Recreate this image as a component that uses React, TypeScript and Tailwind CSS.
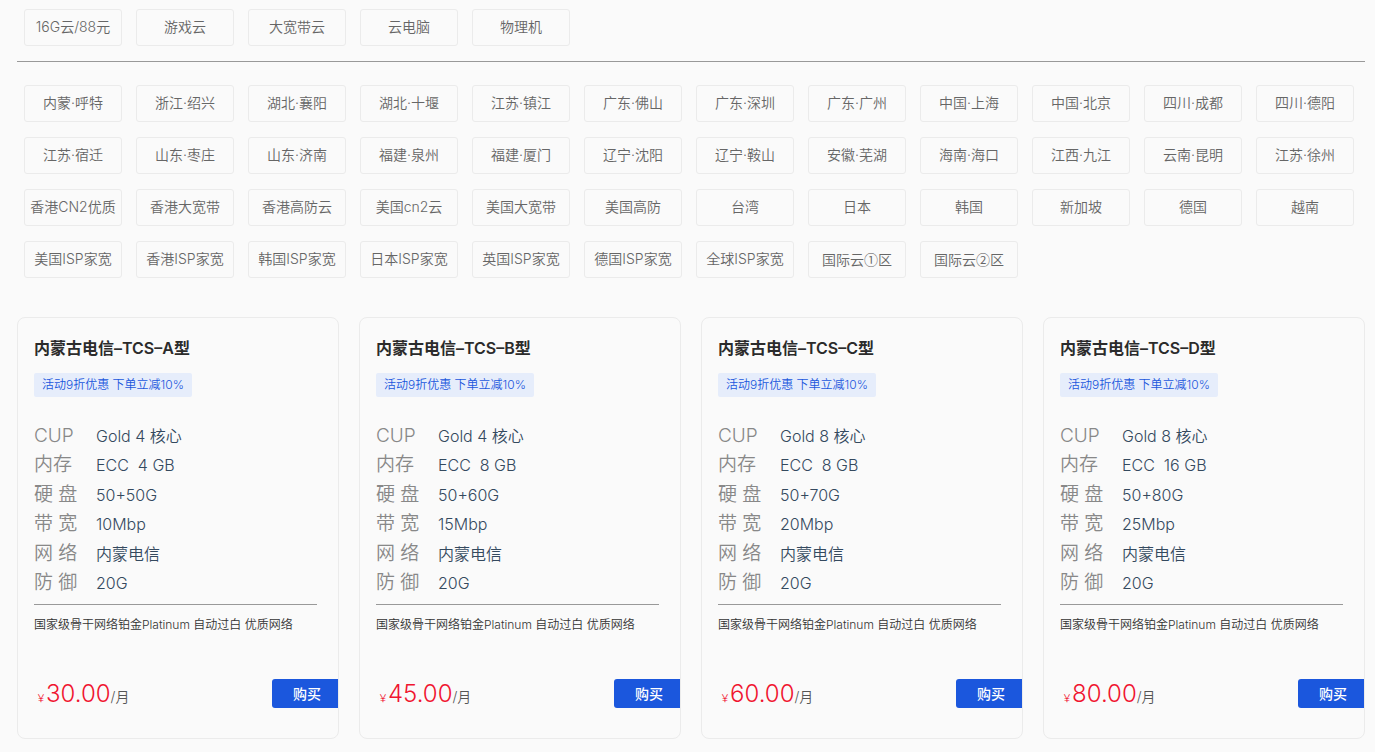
const CATEGORIES = ["16G云/88元", "游戏云", "大宽带云", "云电脑", "物理机"]

const REGIONS = [
  "内蒙·呼特", "浙江·绍兴", "湖北·襄阳", "湖北·十堰", "江苏·镇江", "广东·佛山",
  "广东·深圳", "广东·广州", "中国·上海", "中国·北京", "四川·成都", "四川·德阳",
  "江苏·宿迁", "山东·枣庄", "山东·济南", "福建·泉州", "福建·厦门", "辽宁·沈阳",
  "辽宁·鞍山", "安徽·芜湖", "海南·海口", "江西·九江", "云南·昆明", "江苏·徐州",
  "香港CN2优质", "香港大宽带", "香港高防云", "美国cn2云", "美国大宽带", "美国高防",
  "台湾", "日本", "韩国", "新加坡", "德国", "越南",
  "美国ISP家宽", "香港ISP家宽", "韩国ISP家宽", "日本ISP家宽", "英国ISP家宽", "德国ISP家宽",
  "全球ISP家宽", "国际云①区", "国际云②区",
]

interface Plan {
  id: string
  cores: number
  memory: number
  disk: string
  bandwidth: string
  price: string
}

const PLANS: Plan[] = [
  { id: "A", cores: 4, memory: 4, disk: "50+50G", bandwidth: "10Mbp", price: "30.00" },
  { id: "B", cores: 4, memory: 8, disk: "50+60G", bandwidth: "15Mbp", price: "45.00" },
  { id: "C", cores: 8, memory: 8, disk: "50+70G", bandwidth: "20Mbp", price: "60.00" },
  { id: "D", cores: 8, memory: 16, disk: "50+80G", bandwidth: "25Mbp", price: "80.00" },
]

// Inter draws circled digits oversized, so those names use the CJK font alone
const hasCircledDigit = (text: string) => /[①②]/.test(text)

function Tiles({ items }: { items: string[] }) {
  return (
    <div className="flex flex-wrap gap-x-3.5 gap-y-[15px] pl-[7px]">
      {items.map((item) => (
        <button
          key={item}
          type="button"
          className={`h-[37px] w-[98px] rounded-[3px] border border-[#ebebeb] pb-0.5 text-sm whitespace-nowrap text-[#666] ${
            hasCircledDigit(item) ? "font-['Noto_Sans_CJK_SC',sans-serif]" : ""
          }`}
        >
          {item}
        </button>
      ))}
    </div>
  )
}

function PlanCard({ plan }: { plan: Plan }) {
  const specs = [
    ["CUP", `Gold ${plan.cores} 核心`],
    ["内存", `ECC  ${plan.memory} GB`],
    ["硬 盘", plan.disk],
    ["带 宽", plan.bandwidth],
    ["网 络", "内蒙电信"],
    ["防 御", "20G"],
  ]

  return (
    <article className="flex flex-col overflow-hidden rounded-lg border border-[#ebebeb] pt-[18px] pb-[30px] pl-4">
      <h2 className="text-base leading-6 font-semibold text-[#2b2b2b]">
        内蒙古电信–TCS–{plan.id}型
      </h2>
      <p className="mt-[13px] self-start rounded-xs bg-[#e6edfb] px-2 text-xs leading-6 text-[#1b57dd]">
        活动9折优惠 下单立减10%
      </p>

      {/* Specs */}
      <dl className="mt-6 grid min-h-[177px] auto-rows-fr">
        {specs.map(([label, value]) => (
          <div key={label} className="flex items-center">
            <dt className="w-[62px] text-[19px] leading-7 text-[#888]">{label}</dt>
            <dd className="text-base leading-7 whitespace-pre text-[#34495e]">{value}</dd>
          </div>
        ))}
      </dl>

      <hr className="mt-1.5 mr-[21px] border-[#999]" />
      <p className="mt-2.5 text-xs leading-5 text-[#333]">
        国家级骨干网络铂金Platinum 自动过白 优质网络
      </p>

      {/* Price and buy button */}
      <div className="mt-11 flex items-center justify-between">
        <p className="flex items-baseline pl-0.5 leading-none text-[#f0142f]">
          <span className="text-[10px] leading-none">￥</span>
          <span className="text-2xl leading-7">{plan.price}</span>
          <span className="text-sm leading-none text-[#555]">/月</span>
        </p>
        <button
          type="button"
          className="rounded-l-[3px] bg-[#1b57dd] pr-[17px] pl-[21px] text-sm leading-[29px] font-medium text-white"
        >
          购买
        </button>
      </div>
    </article>
  )
}

export default function App() {
  return (
    <main className="min-h-screen bg-[#fafafa] pt-[9px] pr-2.5 pb-[13px] pl-[17px] font-['Inter','Noto_Sans_CJK_SC',sans-serif] font-[350]">
      <Tiles items={CATEGORIES} />
      <hr className="mt-[15px] mb-[23px] border-[#999]" />
      <Tiles items={REGIONS} />
      <section className="mt-[39px] grid grid-cols-4 gap-5">
        {PLANS.map((plan) => (
          <PlanCard key={plan.id} plan={plan} />
        ))}
      </section>
    </main>
  )
}
